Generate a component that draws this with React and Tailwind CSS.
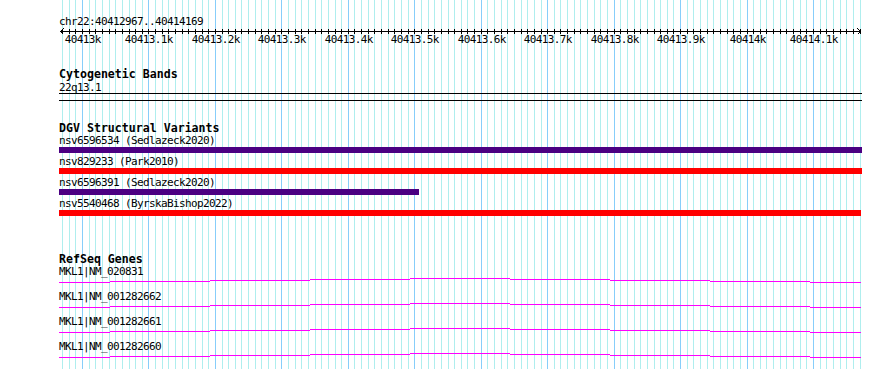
import React from 'react'

// one grid line every 10 bp, a darker one every 100 bp
const gridX = (k) => Math.round(82 + k * 6.6455)
const grid = Array.from({ length: 121 }, (_, i) => i - 3)
const majors = grid.filter((k) => k % 10 === 0 && k >= 0)

const tickLabel = (k) => {
  if (k === 0) return '40413k'
  if (k === 100) return '40414k'
  if (k > 100) return `40414.${(k - 100) / 10}k`
  return `40413.${k / 10}k`
}

const variants = [
  { name: 'nsv6596534 (Sedlazeck2020)', color: 'bg-[#4b0082]', width: 'w-[803px]' },
  { name: 'nsv829233 (Park2010)', color: 'bg-[#ff0000]', width: 'w-[803px]' },
  { name: 'nsv6596391 (Sedlazeck2020)', color: 'bg-[#4b0082]', width: 'w-[360px]' },
  { name: 'nsv5540468 (ByrskaBishop2022)', color: 'bg-[#ff0000]', width: 'w-[802px]' },
]

const genes = ['MKL1|NM_020831', 'MKL1|NM_001282662', 'MKL1|NM_001282661', 'MKL1|NM_001282660']

// intron "hat" connector, pixel steps [x0, x1, row]
const hat = [
  [0, 51, 4], [51, 151, 3], [151, 251, 2], [251, 351, 1], [351, 451, 0],
  [451, 551, 1], [551, 651, 2], [651, 751, 3], [751, 802, 4],
]

const GridLines = () => (
  <svg className="absolute inset-0" width="890" height="369" shapeRendering="crispEdges">
    {grid.map((k) => (
      <rect key={k} x={gridX(k)} y="0" width="1" height="369" fill={k % 10 === 0 ? '#87cefa' : '#afeeee'} />
    ))}
  </svg>
)

const Ruler = () => (
  <svg width="803" height="20" className="block overflow-visible" shapeRendering="crispEdges">
    <rect x="1" y="3" width="801" height="1" fill="#000" />
    {grid.map((k) => (
      <rect key={k} x={gridX(k) - 59} y="1" width="1" height="5" fill="#000" />
    ))}
    <polyline points="4.5,0.5 1.5,3.5 4.5,6.5" fill="none" stroke="#000" strokeWidth="1" />
    <polyline points="798.5,0.5 801.5,3.5 798.5,6.5" fill="none" stroke="#000" strokeWidth="1" />
    {majors.map((k) => (
      <text key={k} x={gridX(k) - 59 + 0.8} y="15" textAnchor="middle" fontSize="11" letterSpacing="-0.62" fill="#000">
        {tickLabel(k)}
      </text>
    ))}
  </svg>
)

const Hat = () => (
  <svg width="803" height="12" className="block" shapeRendering="crispEdges">
    {hat.map(([x0, x1, row]) => (
      <rect key={x0} x={x0} y={row} width={x1 - x0} height="1" fill="#ff00ff" />
    ))}
  </svg>
)

const label = 'h-[13px] text-[11px] leading-[13px] tracking-[-0.62px] whitespace-pre'

export default function App() {
  return (
    <div className="relative w-[890px] h-[369px] overflow-hidden bg-white text-black font-['DejaVu_Sans_Mono',monospace]">
      <GridLines />
      <div className="relative flex flex-col pl-[59px] pt-[15px] w-[862px]">
        {/* position header */}
        <div className={label}>chr22:40412967..40414169</div>
        <Ruler />

        {/* cytogenetic bands */}
        <div className="mt-[19px] h-[14px] text-[11.6px] leading-[14px] font-bold">Cytogenetic Bands</div>
        <div className="h-[12px] text-[11px] leading-[13px] tracking-[-0.62px]">22q13.1</div>
        <div className="h-px w-[803px] bg-black" />
        <div className="mt-[6px] h-px w-[803px] bg-black" />

        {/* DGV */}
        <div className="mt-[20px] h-[13px] text-[11.6px] leading-[14px] font-bold">DGV Structural Variants</div>
        <div className="flex flex-col gap-[2px]">
          {variants.map((v) => (
            <div key={v.name} className="flex flex-col">
              <div className={label}>{v.name}</div>
              <div className={`h-[6px] ${v.width} ${v.color}`} />
            </div>
          ))}
        </div>

        {/* RefSeq */}
        <div className="mt-[36px] h-[13px] text-[11.6px] leading-[14px] font-bold">RefSeq Genes</div>
        {genes.map((g) => (
          <div key={g} className="flex flex-col">
            <div className={label}>{g}</div>
            <Hat />
          </div>
        ))}
      </div>
    </div>
  )
}
